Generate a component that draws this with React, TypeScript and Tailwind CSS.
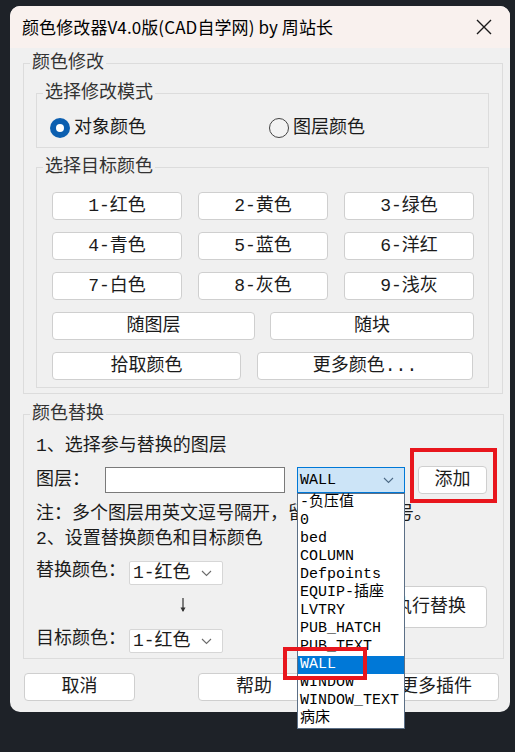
import React from "react";

const cjk = { fontFamily: '"Liberation Mono", "Noto Sans CJK SC", monospace' };
const sans = { fontFamily: '"Noto Sans CJK SC", "Noto Sans", sans-serif' };

const colorButtons = [
  "1-红色",
  "2-黄色",
  "3-绿色",
  "4-青色",
  "5-蓝色",
  "6-洋红",
  "7-白色",
  "8-灰色",
  "9-浅灰",
];

const layers = [
  "-负压值",
  "0",
  "bed",
  "COLUMN",
  "Defpoints",
  "EQUIP-插座",
  "LVTRY",
  "PUB_HATCH",
  "PUB_TEXT",
  "WALL",
  "WINDOW",
  "WINDOW_TEXT",
  "病床",
];

function Btn({ label, className = "" }: { label: string; className?: string }) {
  return (
    <button
      className={
        "h-[28px] bg-white border border-[#cfcfcf] rounded-[4px] text-[18px] leading-none text-[#1b1b1b] flex items-center justify-center " +
        className
      }
    >
      {label}
    </button>
  );
}

function Chevron({ color = "#6b6b6b" }: { color?: string }) {
  return (
    <svg width="11" height="7" viewBox="0 0 11 7">
      <polyline points="1,1 5.5,5.5 10,1" fill="none" stroke={color} strokeWidth="1.1" />
    </svg>
  );
}

function ColorCombo() {
  return (
    <div className="w-[94px] h-[24px] bg-white border border-[#d6d6d6] rounded-[2px] flex items-center pl-[3px] pr-[10px] text-[18px]">
      <span className="flex-1 leading-none">1-红色</span>
      <Chevron />
    </div>
  );
}

export default function App() {
  return (
    <div className="h-[752px] bg-[#1e2228] pt-[6px] pl-[10px] overflow-hidden">
      <div className="w-[500px] bg-[#f0f0f0] rounded-[10px] text-[#1b1b1b]" style={cjk}>
        {/* title bar */}
        <div className="h-[42px] bg-[#f9f1ee] rounded-t-[10px] flex items-center pl-[12px] pr-[18px]" style={sans}>
          <span className="text-[17px] text-black flex-1 tracking-[0.1px]">
            颜色修改器V4.0版(CAD自学网) by 周站长
          </span>
          <svg width="16" height="16" viewBox="0 0 16 16">
            <path d="M1 1 L15 15 M15 1 L1 15" stroke="#1a1a1a" strokeWidth="1.4" />
          </svg>
        </div>

        {/* group 1 */}
        <fieldset className="mt-[3px] ml-[13px] mr-[7px] border border-[#dcdcdc] pb-[5px]">
          <legend className="ml-[6px] px-[2px] text-[18px] leading-[24px] text-[#333]">颜色修改</legend>

          <fieldset className="mt-[6px] ml-[12px] mr-[13px] border border-[#dcdcdc] pt-[11px] pb-[7px]">
            <legend className="ml-[6px] px-[2px] text-[18px] leading-[24px] text-[#333]">选择修改模式</legend>
            <div className="flex items-center h-[24px] pl-[13px]">
              <div className="w-[219px] flex items-center gap-[4px]">
                <span className="w-[20px] h-[20px] rounded-full bg-[#0c5fb0] flex items-center justify-center">
                  <span className="w-[8px] h-[8px] rounded-full bg-white" />
                </span>
                <span className="text-[18px] leading-none">对象颜色</span>
              </div>
              <div className="flex items-center gap-[4px]">
                <span className="w-[20px] h-[20px] rounded-full border border-[#444] bg-[#f3f3f3]" />
                <span className="text-[18px] leading-none">图层颜色</span>
              </div>
            </div>
          </fieldset>

          <fieldset className="mt-[7px] ml-[12px] mr-[13px] border border-[#dcdcdc] pt-[13px] pb-[7px] pl-[15px]">
            <legend className="ml-[-9px] px-[2px] text-[18px] leading-[24px] text-[#333]">选择目标颜色</legend>
            <div className="grid grid-cols-[130px_130px_130px] gap-x-[16px] gap-y-[12px]">
              {colorButtons.map((c) => (
                <Btn key={c} label={c} />
              ))}
            </div>
            <div className="flex gap-[15px] mt-[12px]">
              <Btn label="随图层" className="w-[203px]" />
              <Btn label="随块" className="w-[204px]" />
            </div>
            <div className="flex gap-[16px] mt-[12px]">
              <Btn label="拾取颜色" className="w-[189px]" />
              <Btn label="更多颜色..." className="w-[216px]" />
            </div>
          </fieldset>
        </fieldset>

        {/* group 2 */}
        <fieldset className="mt-[8px] ml-[13px] mr-[7px] border border-[#dcdcdc] pl-[12px] pr-[16px] pb-[5px]">
          <legend className="ml-[-6px] px-[2px] text-[18px] leading-[24px] text-[#333]">颜色替换</legend>
          <div className="mt-[8px] text-[18px] leading-[24px]">1、选择参与替换的图层</div>

          <div className="mt-[8px] h-[28px] flex items-center">
            <span className="w-[69px] text-[18px] leading-none">图层：</span>
            <div className="w-[180px] h-[26px] bg-white border border-[#7a7a7a]" />
            <div className="relative ml-[12px] w-[108px] h-[26px] bg-[#cce4f7] border border-[#0078d7] flex items-center pl-[2px] pr-[10px]">
              <span className="flex-1 text-[15px] leading-none text-black">WALL</span>
              <Chevron color="#4d6a86" />
              {/* open list */}
              <div className="absolute left-[-1px] top-[25px] w-[108px] bg-white border border-[#5b6f86] z-10">
                {layers.map((l) => (
                  <div
                    key={l}
                    className={
                      "h-[18px] pl-[2px] text-[15px] leading-[18px] whitespace-nowrap " +
                      (l === "WALL" ? "bg-[#0078d7] text-white" : "text-black")
                    }
                  >
                    {l}
                  </div>
                ))}
                <div className="absolute left-[-15px] top-[153px] w-[84px] h-[33px] border-[4px] border-[#e8161d]" />
              </div>
            </div>
            <div className="relative ml-[13px]">
              <Btn label="添加" className="w-[69px]" />
              <div className="absolute left-[-8px] top-[-18px] w-[87px] h-[55px] border-[4px] border-[#e8161d]" />
            </div>
          </div>

          <div className="mt-[8px] text-[18px] leading-[24px] whitespace-nowrap">
            注：多个图层用英文逗号隔开，留意是英文逗号。
          </div>
          <div className="mt-[1px] text-[18px] leading-[24px]">2、设置替换颜色和目标颜色</div>

          <div className="mt-[10px] flex items-center">
            <div className="flex flex-col">
              <div className="flex items-center h-[24px]">
                <span className="w-[93px] text-[18px] leading-none pb-[4px]">替换颜色：</span>
                <ColorCombo />
              </div>
              <div className="h-[44px] flex items-center pl-[143px] pb-[4px]">
                <svg width="8" height="15" viewBox="0 0 8 15">
                  <path d="M4 0 L4 13" stroke="#333" strokeWidth="1.2" />
                  <path d="M1.5 9.5 L4 14 L6.5 9.5 Z" fill="#333" />
                </svg>
              </div>
              <div className="flex items-center h-[24px]">
                <span className="w-[93px] text-[18px] leading-none pb-[4px]">目标颜色：</span>
                <ColorCombo />
              </div>
            </div>
            <button className="ml-auto w-[114px] h-[42px] bg-white border border-[#cfcfcf] rounded-[4px] text-[18px] leading-none">
              执行替换
            </button>
          </div>
        </fieldset>

        {/* bottom buttons */}
        <div className="mt-[14px] pb-[11px] pl-[14px] pr-[11px] flex justify-between">
          <Btn label="取消" className="w-[111px]" />
          <Btn label="帮助" className="w-[112px]" />
          <Btn label="更多插件" className="w-[126px]" />
        </div>
      </div>
    </div>
  );
}
